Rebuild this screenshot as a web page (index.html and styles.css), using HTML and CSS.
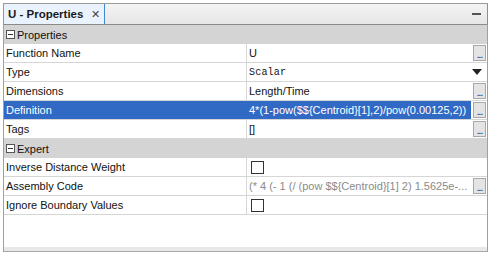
FILE: index.html
```html
<!DOCTYPE html>
<html lang="en">
<head>
  <meta charset="UTF-8">
  <title>U - Properties</title>
  <link rel="stylesheet" href="styles.css">
</head>
<body>
  <div class="panel">
    <div class="tabbar">
      <div class="tab">U - Properties<span class="tab-close">&#x2715;</span></div>
      <div class="tab-fill"><span class="minimize"></span></div>
    </div>
    <div class="sheet">
      <div class="group"><span class="toggle"></span>Properties</div>
      <div class="row">
        <div class="label">Function Name</div>
        <div class="value"><span class="text">U</span><span class="dots">...</span></div>
      </div>
      <div class="row">
        <div class="label">Type</div>
        <div class="value"><span class="text mono">Scalar</span><span class="arrow"></span></div>
      </div>
      <div class="row">
        <div class="label">Dimensions</div>
        <div class="value"><span class="text">Length/Time</span><span class="dots">...</span></div>
      </div>
      <div class="row selected">
        <div class="label">Definition</div>
        <div class="value"><span class="text">4*(1-pow($${Centroid}[1],2)/pow(0.00125,2))</span><span class="dots">...</span></div>
      </div>
      <div class="row">
        <div class="label">Tags</div>
        <div class="value"><span class="text">[]</span><span class="dots">...</span></div>
      </div>
      <div class="group"><span class="toggle"></span>Expert</div>
      <div class="row">
        <div class="label">Inverse Distance Weight</div>
        <div class="value"><span class="check"></span></div>
      </div>
      <div class="row">
        <div class="label">Assembly Code</div>
        <div class="value"><span class="text muted">(* 4 (- 1 (/ (pow $${Centroid}[1] 2) 1.5625e-...</span><span class="dots">...</span></div>
      </div>
      <div class="row">
        <div class="label">Ignore Boundary Values</div>
        <div class="value"><span class="check"></span></div>
      </div>
      <div class="blank"></div>
      <div class="strip"></div>
    </div>
  </div>
</body>
</html>
```

FILE: styles.css
```css
body { margin:0; background:#fff; font-family:"Liberation Sans", Arial, sans-serif; font-size:11px; color:#000; }
.panel { margin:3px 2px 0 3px; }
.tabbar { display:flex; height:20px; border-top:1px solid #9a9a9a; }
.tab { flex-shrink:0; display:flex; align-items:center; width:96px; padding:0 0 0 4px; background:#eaf3fd; border-left:1px solid #6a9fd0; border-right:1px solid #3c8ad0; font-weight:bold; font-size:11.5px; color:#1a1a1a; white-space:pre; }
.tab-close { margin-left:8px; font-weight:normal; font-size:11px; color:#444; }
.tab-fill { flex:1; display:flex; align-items:center; justify-content:flex-end; background:linear-gradient(#f4f4f4, #e6e6e6); border-right:1px solid #5b9bd5; }
.minimize { width:9px; height:2px; background:#555; margin-right:6px; }
.sheet { border-top:1px solid #8a8a8a; border-left:1px solid #a0a0a0; border-right:1px solid #a0a0a0; }
.group { display:flex; align-items:center; height:19px; background:#d4d4d4; font-size:11px; color:#111; }
.toggle { position:relative; width:7px; height:7px; border:1px solid #555; margin:0 2px 0 2px; background:#fff; }
.toggle::after { content:''; position:absolute; left:1px; top:3px; width:5px; height:1px; background:#333; }
.row { display:flex; height:18px; border-bottom:1px solid #d6d6d6; }
.label { width:240px; padding-left:2px; display:flex; align-items:center; border-right:1px solid #d6d6d6; color:#111; white-space:nowrap; }
.value { flex:1; display:flex; align-items:center; padding-left:2px; position:relative; }
.text { flex:1; white-space:nowrap; overflow:hidden; color:#111; }
.mono { font-family:"Liberation Mono", monospace; font-size:10px; letter-spacing:0.2px; }
.muted { color:#8a8a8a; }
.dots { width:11px; height:14px; margin-right:1px; border:1px solid #a8a8a8; background:#e4e4e4; font-size:10px; line-height:18px; text-align:center; color:#222; letter-spacing:-1px; }
.arrow { width:0; height:0; margin-right:5px; border-left:5px solid transparent; border-right:5px solid transparent; border-top:6px solid #222; }
.selected .label, .selected .text { background:#316ac5; color:#fff; }
.selected .label { border-right-color:#316ac5; }
.selected .value { padding-left:0; }
.selected .text { padding-left:2px; align-self:stretch; display:flex; align-items:center; margin-right:2px; }
.check { width:11px; height:11px; border:1px solid #333; margin-left:2px; background:#fff; }
.blank { height:32px; }
.strip { height:4px; background:#e8e8e8; border-bottom:1px solid #a8a8a8; }
```
